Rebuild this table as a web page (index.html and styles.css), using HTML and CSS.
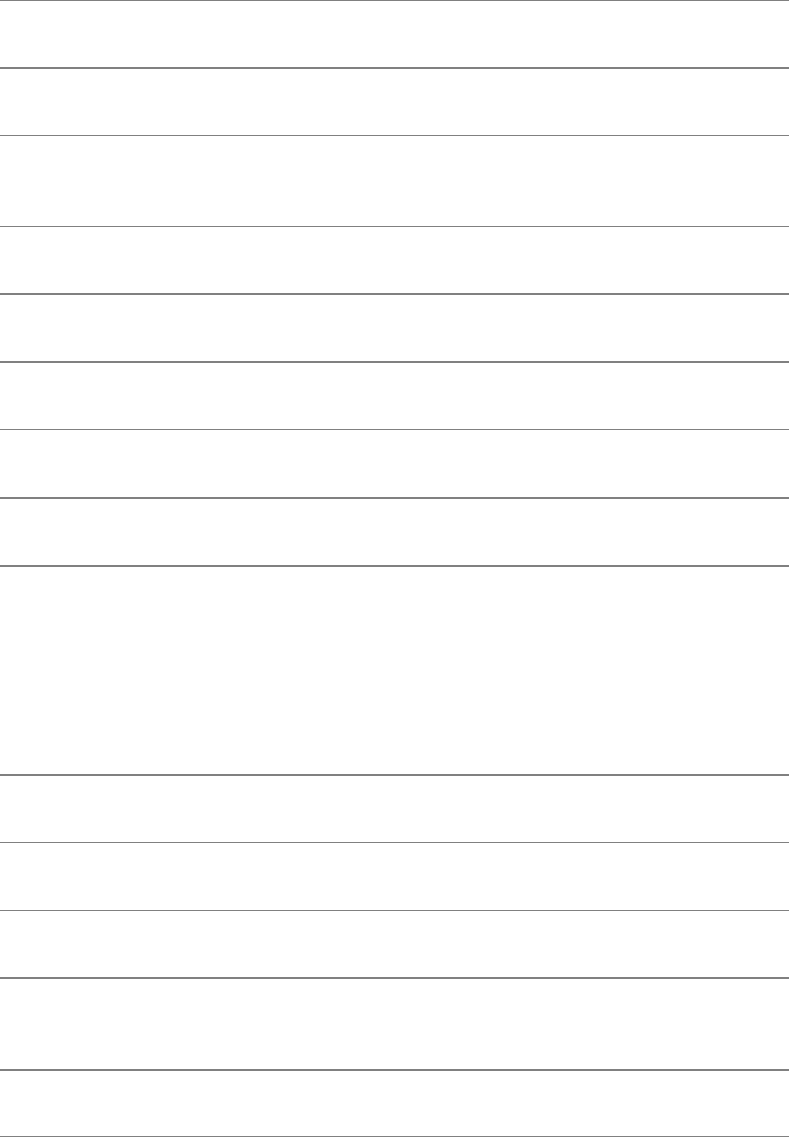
FILE: index.html
```html
<!DOCTYPE html>
<html lang="en">
<head>
<meta charset="utf-8">
<title>Rows</title>
<link rel="stylesheet" href="styles.css">
</head>
<body>
<div class="sheet">
  <div class="row h66 thick"></div>
  <div class="row h66 thin"></div>
  <div class="row h90 thin"></div>
  <div class="row h66 thick"></div>
  <div class="row h66 thick"></div>
  <div class="row h66 thin"></div>
  <div class="row h67 thick"></div>
  <div class="row h66 thick"></div>
  <div class="row h207 thick"></div>
  <div class="row h66 thin"></div>
  <div class="row h67 thin"></div>
  <div class="row h66 thick"></div>
  <div class="row h90 thick"></div>
  <div class="row h65 thin"></div>
</div>
</body>
</html>
```
FILE: styles.css
```css
html, body {
  margin: 0;
  padding: 0;
  background: #ffffff;
  font-family: "Liberation Sans", Arial, sans-serif;
}
.sheet {
  width: 789px;
  display: flex;
  flex-direction: column;
  border-top: 1px solid #808080;
}
.row { flex: none; }
.thin { border-bottom: 1px solid #808080; }
.thick { border-bottom: 2px solid #808080; }
.h65 { height: 65px; }
.h66 { height: 66px; }
.h67 { height: 67px; }
.h90 { height: 90px; }
.h207 { height: 207px; }
```
